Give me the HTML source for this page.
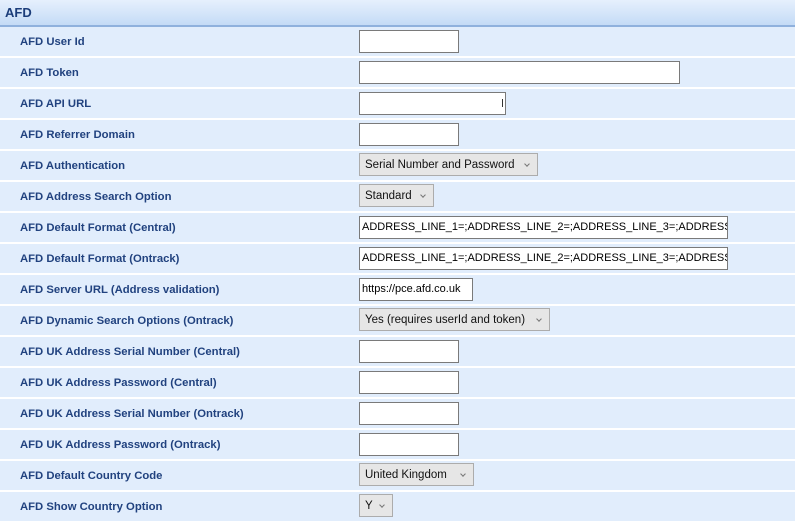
<!DOCTYPE html>
<html><head><style>
body{margin:0;width:795px;height:523px;background:#e1edfc;font-family:"Liberation Sans",sans-serif;overflow:hidden;position:relative}
.hd{position:absolute;left:0;top:0;width:795px;height:25px;background:linear-gradient(#e6f0fd,#c4dbf6);border-bottom:2px solid #8fb1dd;font-weight:bold;font-size:13px;color:#1b3d7a;line-height:26px;padding-left:5px;box-sizing:content-box}
.r{position:absolute;left:0;width:795px;height:29px;border-bottom:2px solid #fff}
.l{position:absolute;left:20px;top:0;line-height:30px;font-size:11.3px;font-weight:bold;color:#21427f}
.i{position:absolute;left:359px;top:3px;height:21px;background:#fff;border:1px solid #7a7a7a;font-size:11px;line-height:21px;padding-left:2px;box-sizing:content-box;white-space:nowrap;overflow:hidden;color:#000}
.s{position:absolute;left:359px;top:2px;height:23px;background:#e6e6e6;border:1px solid #acacac;font-size:11.5px;line-height:22px;padding-left:5px;color:#111;box-sizing:border-box}
.s:after{content:"";position:absolute;right:8px;top:8px;width:3px;height:3px;border-right:1px solid #777;border-bottom:1px solid #777;transform:rotate(45deg)}
</style></head><body>
<div class="hd">AFD</div>
<div class="r" style="top:27px"><div class="l">AFD User Id</div><div class="i" style="width:96px"></div></div>
<div class="r" style="top:58px"><div class="l">AFD Token</div><div class="i" style="width:317px"></div></div>
<div class="r" style="top:89px"><div class="l">AFD API URL</div><div class="i" style="width:143px"><span style="position:absolute;right:2px;top:6px;width:1px;height:8px;background:#333"></span></div></div>
<div class="r" style="top:120px"><div class="l">AFD Referrer Domain</div><div class="i" style="width:96px"></div></div>
<div class="r" style="top:151px"><div class="l">AFD Authentication</div><div class="s" style="width:179px">Serial Number and Password</div></div>
<div class="r" style="top:182px"><div class="l">AFD Address Search Option</div><div class="s" style="width:75px">Standard</div></div>
<div class="r" style="top:213px"><div class="l">AFD Default Format (Central)</div><div class="i" style="width:365px">ADDRESS_LINE_1=;ADDRESS_LINE_2=;ADDRESS_LINE_3=;ADDRESS_LINE_4=</div></div>
<div class="r" style="top:244px"><div class="l">AFD Default Format (Ontrack)</div><div class="i" style="width:365px">ADDRESS_LINE_1=;ADDRESS_LINE_2=;ADDRESS_LINE_3=;ADDRESS_LINE_4=</div></div>
<div class="r" style="top:275px"><div class="l">AFD Server URL (Address validation)</div><div class="i" style="width:110px">https://pce.afd.co.uk</div></div>
<div class="r" style="top:306px"><div class="l">AFD Dynamic Search Options (Ontrack)</div><div class="s" style="width:191px">Yes (requires userId and token)</div></div>
<div class="r" style="top:337px"><div class="l">AFD UK Address Serial Number (Central)</div><div class="i" style="width:96px"></div></div>
<div class="r" style="top:368px"><div class="l">AFD UK Address Password (Central)</div><div class="i" style="width:96px"></div></div>
<div class="r" style="top:399px"><div class="l">AFD UK Address Serial Number (Ontrack)</div><div class="i" style="width:96px"></div></div>
<div class="r" style="top:430px"><div class="l">AFD UK Address Password (Ontrack)</div><div class="i" style="width:96px"></div></div>
<div class="r" style="top:461px"><div class="l">AFD Default Country Code</div><div class="s" style="width:115px">United Kingdom</div></div>
<div class="r" style="top:492px"><div class="l">AFD Show Country Option</div><div class="s" style="width:34px">Y</div></div>
</body></html>
